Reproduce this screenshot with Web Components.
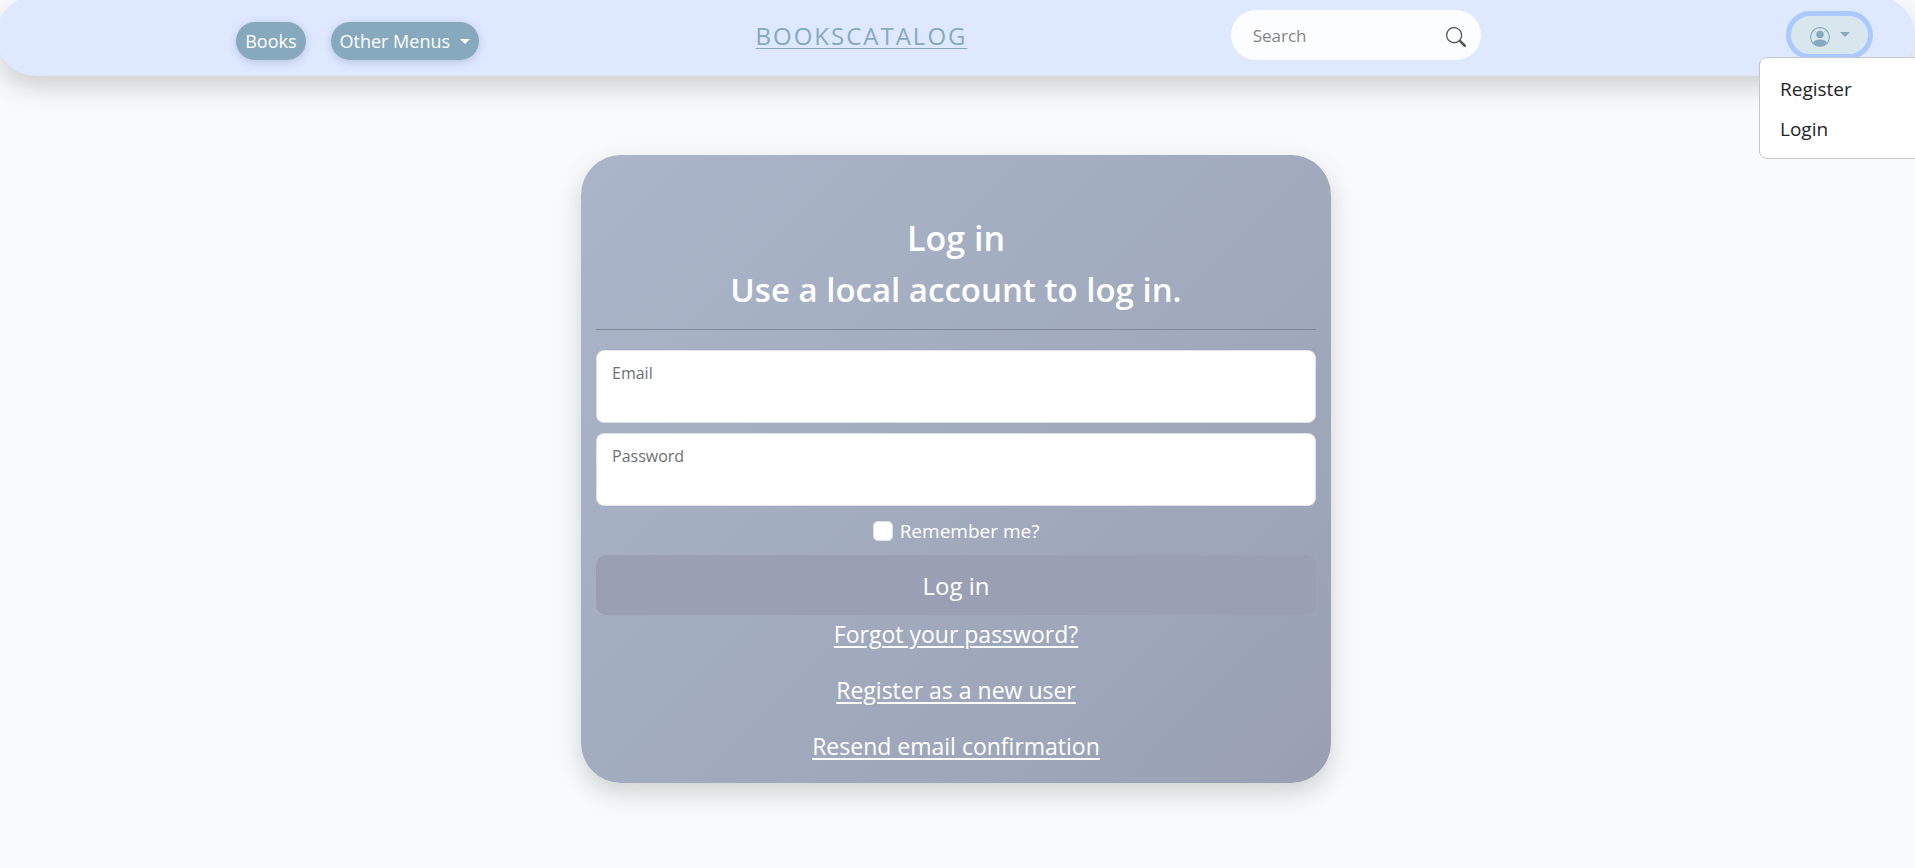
<!DOCTYPE html>
<html lang="en">
<head>
<meta charset="utf-8">
<title>Log in - BooksCatalog</title>
<style>
body{margin:0;min-height:100vh;background:#f8fafc;overflow-x:hidden;font-family:"Open Sans","Noto Sans",sans-serif;font-size:18px;color:#212529}
main{padding-right:3px}
</style>
</head>
<body>
<site-header></site-header>
<main><login-card></login-card></main>
<script>
const define=(name,html,setup)=>{
  const t=document.createElement('template');t.innerHTML=html;
  customElements.define(name,class extends HTMLElement{
    constructor(){super();this.attachShadow({mode:'open'}).append(t.content.cloneNode(true));}
    connectedCallback(){if(setup)setup(this,this.shadowRoot);}
  });
};

define('pill-button',`<style>
:host{display:block}
button{display:flex;align-items:center;gap:10px;height:38px;padding:0 9px;border:0;border-radius:19px;background:#87a9be;color:#fff;font:inherit;box-shadow:0 2px 8px rgba(60,60,110,.22)}
</style><button type="button"><slot></slot></button>`);

define('caret-down',`<style>
:host{display:block;border:5px solid transparent;border-top-color:currentColor;border-bottom:0}
</style>`);

define('search-box',`<style>
:host{display:flex;align-items:center;box-sizing:border-box;width:250px;height:50px;padding:0 15px 0 22px;border-radius:25px;background:#fcfdff}
input{flex:1;min-width:0;padding:0;border:0;outline:0;background:none;font:inherit;font-size:17px;color:#212529}
input::placeholder{color:#858585;opacity:1}
button{display:flex;padding:4px 0 0;border:0;background:none;color:#555}
</style>
<input type="search" placeholder="Search" aria-label="Search">
<button type="button" aria-label="Run search"><svg width="20" height="20" viewBox="0 0 16 16" fill="currentColor"><path d="M11.742 10.344a6.5 6.5 0 1 0-1.397 1.398h-.001q.044.06.098.115l3.85 3.85a1 1 0 0 0 1.415-1.414l-3.85-3.85a1 1 0 0 0-.115-.1zM12 6.5a5.5 5.5 0 1 1-11 0 5.5 5.5 0 0 1 11 0"/></svg></button>`);

define('user-menu',`<style>
:host{display:block;position:relative}
button{display:flex;align-items:center;gap:10px;height:38px;padding:3px 18px 0 19px;border:0;border-radius:19px;background:#d8e6ee;color:#87a9be;outline:5px solid #a9c9ff}
caret-down{margin-bottom:4px}
nav{position:absolute;z-index:1;top:41px;left:-32px;box-sizing:border-box;width:200px;padding:11px 0 9px;border:1px solid #c4c6ca;border-radius:8px;background:#fff}
a{display:block;padding:0 20px;font-size:19px;line-height:40px;color:#212529;text-decoration:none}
</style>
<button type="button" aria-label="Account" aria-expanded="true"><svg width="20" height="20" viewBox="0 0 16 16" fill="currentColor"><path d="M11 6a3 3 0 1 1-6 0 3 3 0 0 1 6 0"/><path fill-rule="evenodd" d="M0 8a8 8 0 1 1 16 0A8 8 0 0 1 0 8m8-7a7 7 0 0 0-5.468 11.37C3.242 11.226 4.805 10 8 10s4.757 1.225 5.468 2.37A7 7 0 0 0 8 1"/></svg><caret-down></caret-down></button>
<nav><a href="#register">Register</a><a href="#login">Login</a></nav>`);

define('site-header',`<style>
:host{display:block}
header{display:grid;grid-template-columns:1fr 1fr 1fr;align-items:start;box-sizing:border-box;height:80px;margin:-4px 0 0 -4px;padding:4px 0 0 4px;border-radius:40px;background:#dee9ff;box-shadow:0 12px 24px rgba(50,55,40,.2)}
.links{display:flex;gap:25px;padding-top:22px;padding-left:37%}
.brand{justify-self:center;padding-top:20px;margin-right:192px;font-size:24px;line-height:32px;letter-spacing:2px;color:#87a9be;text-underline-offset:3px;text-decoration-thickness:1px}
.tools{display:flex;justify-content:space-between;margin-left:-46px;padding-right:47px}
search-box{margin-top:10px}
user-menu{margin-top:16px}
</style>
<header>
<div class="links"><pill-button>Books</pill-button><pill-button>Other Menus<caret-down></caret-down></pill-button></div>
<a class="brand" href="#home">BOOKSCATALOG</a>
<div class="tools"><search-box></search-box><user-menu></user-menu></div>
</header>`);

define('form-field',`<style>
:host{display:block;position:relative;box-sizing:border-box;height:73px;border:1px solid #dee2e6;border-radius:8px;background:#fff}
label{position:absolute;left:15px;top:10px;font-size:16px;line-height:24px;color:#6c7075;pointer-events:none}
input{display:block;box-sizing:border-box;width:100%;height:100%;padding:26px 16px 10px;border:0;border-radius:8px;background:none;font:inherit;outline:0}
</style><input id="field"><label for="field"></label>`,(host,root)=>{
  root.querySelector('label').textContent=host.getAttribute('label');
  root.querySelector('input').type=host.getAttribute('type');
});

define('login-card',`<style>
:host{display:block;box-sizing:border-box;width:750px;max-width:100%;margin:79px auto 0;padding:57px 15px 19px;border-radius:40px;background:linear-gradient(135deg,#abb5c9,#9ba4b6 88%,#9a9fb3);color:#fff;text-align:center;box-shadow:0 10px 24px rgba(50,55,40,.2)}
h1,h2{margin:0;font-size:34px;line-height:52px;font-weight:600}
h2{font-size:33px}
hr{margin:13px 0 20px;border:0;border-top:1px solid #818a9d}
form-field{margin-bottom:10px}
.check{display:flex;justify-content:center;align-items:center;gap:7px;height:30px;margin-bottom:9px;font-size:19px}
.check input{appearance:none;box-sizing:border-box;width:20px;height:20px;margin:0;border:1px solid #dee2e6;border-radius:5px;background:#fff}
button{display:block;width:100%;height:60px;border:0;border-radius:10px;background:#9a9fb3;color:#fff;font:inherit;font-size:24px}
.links{display:flex;flex-direction:column;align-items:center;gap:20px;padding-top:1px}
a{font-size:23px;line-height:36px;color:#fff;text-decoration-thickness:2px;text-underline-offset:3px}
</style>
<h1>Log in</h1><h2>Use a local account to log in.</h2><hr>
<form>
<form-field label="Email" type="email"></form-field>
<form-field label="Password" type="password"></form-field>
<div class="check"><input type="checkbox" id="remember"><label for="remember">Remember me?</label></div>
<button type="submit">Log in</button>
</form>
<div class="links"><a href="#forgot">Forgot your password?</a><a href="#register">Register as a new user</a><a href="#resend">Resend email confirmation</a></div>`);
</script>
</body>
</html>
